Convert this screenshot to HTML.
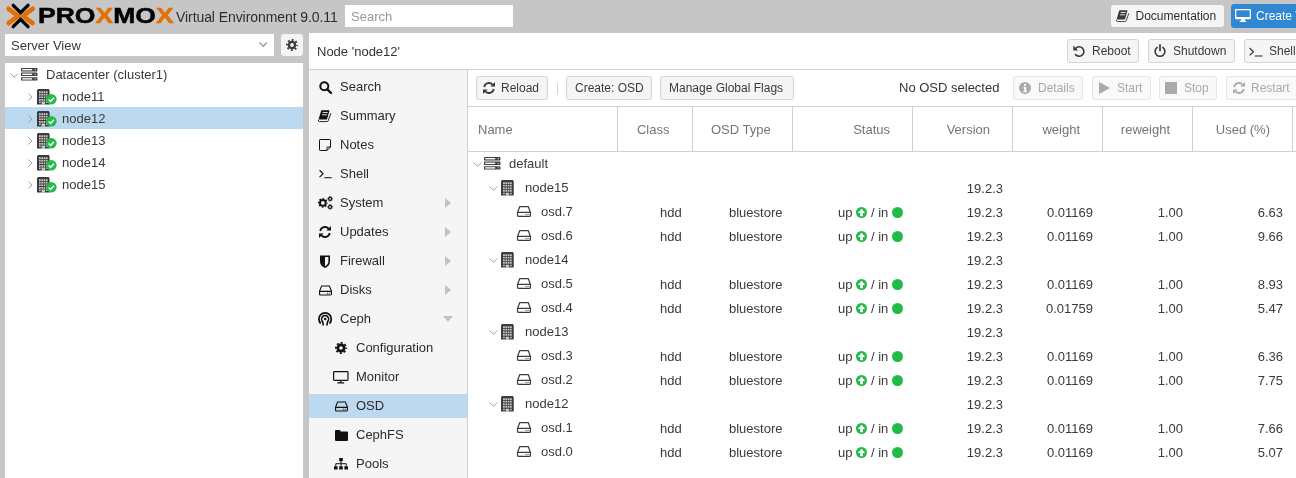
<!DOCTYPE html>
<html lang="en"><head><meta charset="utf-8"><title>node12 - Proxmox Virtual Environment</title>
<style>
*{box-sizing:border-box;margin:0;padding:0}
html,body{width:1296px;height:478px;overflow:hidden;background:#c6c6c6}
body{font-family:"Liberation Sans",sans-serif;font-size:13px;color:#3a3a3a;position:relative}
.abs{position:absolute}
.ic{position:absolute;display:block;overflow:visible}
.t{position:absolute;white-space:nowrap;line-height:16px;height:16px;margin-top:1px}
.btn{position:absolute;height:24px;font-size:12px;border:1px solid #d3d3d3;border-radius:3px;background:#f5f5f5;color:#3a3a3a}
.btn .t{top:3px;margin-top:0}
.btn.dis{background:#f9f9f9;border-color:#e6e6e6;color:#a9a9a9}
.hline{position:absolute;height:1px;background:#cfcfcf}
.vline{position:absolute;width:1px;background:#cfcfcf}
.hd{position:absolute;top:108px;height:44px;line-height:44px;color:#757575;white-space:nowrap}
.row{position:absolute;left:468px;width:828px;height:24px}
.row .t{top:4px;margin-top:0}
.row .c{top:5px}
.nav .t{color:#2a2a2a;margin-top:0}
#root{position:absolute;left:0;top:0;width:1296px;height:478px;will-change:transform;opacity:.999}
</style></head><body><div id="root">

<div class="abs" style="left:0;top:0;width:1296px;height:33px;background:#c6c6c6"></div>
<svg class="ic " viewBox="0 0 30 26" style="width:30px;height:26px;left:5.5px;top:2.6px" fill="currentColor">
<g fill="none" stroke-linecap="round" stroke-linejoin="miter">
<path d="M7.2 2.4 L14.6 9.6 L22 2.4" stroke="#000" stroke-width="3.4"/>
<path d="M7.2 23.6 L14.6 16.4 L22 23.6" stroke="#000" stroke-width="3.4"/>
<path d="M2.6 5.8 L12.2 13 L2.6 20.2" stroke="#e57000" stroke-width="4.6"/>
<path d="M26.6 5.8 L17 13 L26.6 20.2" stroke="#e57000" stroke-width="4.6"/>
</g>
</svg>
<div class="t" id="pmx" style="left:38.3px;top:3.3px;font-weight:bold;font-size:22.3px;line-height:24px;height:24px;letter-spacing:0px;-webkit-text-stroke:0.5px currentColor;transform-origin:0 50%;transform:scaleX(1.19);color:#000">PRO<span style="color:#e57000">X</span>MO<span style="color:#e57000">X</span></div>
<div class="t" id="ve" style="left:176px;top:7px;font-size:14px;line-height:18px;height:18px;letter-spacing:-0.075px;color:#2c2c2c">Virtual Environment 9.0.11</div>
<div class="abs" style="left:345px;top:5px;width:168px;height:22px;background:#fff"></div>
<div class="t" style="left:351px;top:8px;color:#9a9a9a">Search</div>
<div class="btn" style="left:1111px;top:5px;width:113px;height:22px;border:0"><svg class="ic " viewBox="0 0 13.4 12.2" style="width:13.4px;height:12.2px;left:4.5px;top:4.7px;color:#3a3a3a" fill="#3a3a3a"><path d="M3.9 0.2H11Q11.6 0.2 11.4 0.9L9.1 9Q8.9 9.6 8.3 9.6H1.2Q0.5 9.6 0.7 8.9L3.1 0.8Q3.3 0.2 3.9 0.2Z" fill="currentColor"/><path d="M4.7 2.5H9.7M4.05 4.8H9.05" stroke="#f5f5f5" stroke-width="0.9" fill="none"/><path d="M0.5 9.8Q0 11.6 1.6 11.6H9.3Q9.9 11.6 10.1 11L12.9 3.2" fill="none" stroke="currentColor" stroke-width="0.9"/></svg><div class="t" style="left:24.5px;top:3px;color:#2e2e2e">Documentation</div></div>
<div class="btn" style="left:1231px;top:4px;width:80px;background:#2f88d1;border-color:#2f88d1"><svg class="ic " viewBox="0 0 16 13" style="width:16px;height:13px;left:3px;top:4px;color:#fff" fill="#fff"><path d="M1.2 0H14.8Q16 0 16 1.2V9Q16 10.2 14.8 10.2H1.2Q0 10.2 0 9V1.2Q0 0 1.2 0ZM1.3 1.3V7.9H14.7V1.3ZM6.3 10.2H9.7L10.2 12H11.3V13H4.7V12H5.8Z" fill="currentColor" fill-rule="evenodd"/></svg><div class="t" style="left:24px;color:#fff">Create VM</div></div>
<div class="abs" style="left:5px;top:34px;width:269px;height:22px;background:#fff"></div>
<div class="t" style="left:11px;top:37px">Server View</div>
<svg class="ic " viewBox="0 0 8.4 5.2" style="width:8.4px;height:5.2px;left:258.9px;top:41.9px" fill="currentColor"><path d="M0.5 0.6 L4.2 4.3 L7.9 0.6" fill="none" stroke="#9a9a9a" stroke-width="1.4"/></svg>
<div class="abs" style="left:281px;top:34px;width:22px;height:22px;background:#f5f5f5;border-radius:3px"></div>
<svg class="ic " viewBox="0 0 12 12" style="width:12px;height:12px;left:286px;top:39px;color:#3c3c3c" fill="#3c3c3c"><circle cx="6" cy="6" r="3.05" fill="none" stroke="currentColor" stroke-width="2.30"/><circle cx="6" cy="6" r="4.95" fill="none" stroke="currentColor" stroke-width="2.10" stroke-dasharray="1.788 2.099" stroke-dashoffset="0.894"/></svg>
<div class="abs" style="left:5px;top:63px;width:298px;height:415px;background:#fff"></div>
<div class="abs" style="left:5px;top:107px;width:298px;height:22px;background:#bcd9f0"></div>
<svg class="ic " viewBox="0 0 10 6" style="width:8.6px;height:5.2px;left:10px;top:72.6px" fill="currentColor"><path d="M0.6 0.6 L5 5 L9.4 0.6" fill="none" stroke="#9c9c9c" stroke-width="1.15"/></svg>
<svg class="ic " viewBox="0 0 16.4 12.6" style="width:16.4px;height:12.6px;left:20.8px;top:68px;color:#3b3b3b" fill="#3b3b3b"><g fill="currentColor"><rect x="0" y="0" width="16.4" height="3.4" rx=".6"/><rect x="0" y="4.6" width="16.4" height="3.4" rx=".6"/><rect x="0" y="9.2" width="16.4" height="3.4" rx=".6"/></g><g fill="#fff"><rect x="1.2" y="1" width="10" height="1.4"/><rect x="1.2" y="5.6" width="10" height="1.4"/><rect x="1.2" y="10.2" width="10" height="1.4"/><rect x="13.6" y="1.2" width="1.2" height="1"/><rect x="13.6" y="5.8" width="1.2" height="1"/><rect x="13.6" y="10.4" width="1.2" height="1"/></g></svg>
<div class="t" style="left:46px;top:66px">Datacenter (cluster1)</div>
<svg class="ic " viewBox="0 0 6 10" style="width:4.8px;height:8px;left:28.2px;top:93px" fill="currentColor"><path d="M0.6 0.6 L5 5 L0.6 9.4" fill="none" stroke="#9c9c9c" stroke-width="1.15"/></svg>
<svg class="ic " viewBox="0 0 12.6 15.5" style="width:12.6px;height:15.5px;left:37px;top:88.9px;color:#3b3b3b" fill="#3b3b3b"><path d="M0.6 0H12V0.9H12.6V15.5H0V0.9H0.6Z" fill="currentColor"/><g fill="#fff" opacity=".72"><path d="M2 2.2h1.7v1.7H2zM4.3 2.2h1.7v1.7H4.3zM6.6 2.2h1.7v1.7H6.6zM8.9 2.2h1.7v1.7H8.9zM2 4.8h1.7v1.7H2zM4.3 4.8h1.7v1.7H4.3zM6.6 4.8h1.7v1.7H6.6zM8.9 4.8h1.7v1.7H8.9zM2 7.4h1.7v1.7H2zM4.3 7.4h1.7v1.7H4.3zM6.6 7.4h1.7v1.7H6.6zM8.9 7.4h1.7v1.7H8.9zM2 10h1.7v1.7H2zM4.3 10h1.7v1.7H4.3zM6.6 10h1.7v1.7H6.6zM8.9 10h1.7v1.7H8.9zM2 12.6h1.7v1.5H2zM8.9 12.6h1.7v1.5H8.9zM4.6 12.6h3.4v2.9H4.6z"/></g></svg>
<svg class="ic " viewBox="0 0 11 11" style="width:10.6px;height:10.6px;left:45.8px;top:94px" fill="currentColor"><circle cx="5.5" cy="5.5" r="5.5" fill="#21bb48"/><path d="M2.8 5.7L4.8 7.6L8.3 3.8" fill="none" stroke="#fff" stroke-width="1.6"/></svg>
<div class="t" style="left:62px;top:88px">node11</div>
<svg class="ic " viewBox="0 0 6 10" style="width:4.8px;height:8px;left:28.2px;top:115px" fill="currentColor"><path d="M0.6 0.6 L5 5 L0.6 9.4" fill="none" stroke="#9c9c9c" stroke-width="1.15"/></svg>
<svg class="ic " viewBox="0 0 12.6 15.5" style="width:12.6px;height:15.5px;left:37px;top:110.9px;color:#3b3b3b" fill="#3b3b3b"><path d="M0.6 0H12V0.9H12.6V15.5H0V0.9H0.6Z" fill="currentColor"/><g fill="#fff" opacity=".72"><path d="M2 2.2h1.7v1.7H2zM4.3 2.2h1.7v1.7H4.3zM6.6 2.2h1.7v1.7H6.6zM8.9 2.2h1.7v1.7H8.9zM2 4.8h1.7v1.7H2zM4.3 4.8h1.7v1.7H4.3zM6.6 4.8h1.7v1.7H6.6zM8.9 4.8h1.7v1.7H8.9zM2 7.4h1.7v1.7H2zM4.3 7.4h1.7v1.7H4.3zM6.6 7.4h1.7v1.7H6.6zM8.9 7.4h1.7v1.7H8.9zM2 10h1.7v1.7H2zM4.3 10h1.7v1.7H4.3zM6.6 10h1.7v1.7H6.6zM8.9 10h1.7v1.7H8.9zM2 12.6h1.7v1.5H2zM8.9 12.6h1.7v1.5H8.9zM4.6 12.6h3.4v2.9H4.6z"/></g></svg>
<svg class="ic " viewBox="0 0 11 11" style="width:10.6px;height:10.6px;left:45.8px;top:116px" fill="currentColor"><circle cx="5.5" cy="5.5" r="5.5" fill="#21bb48"/><path d="M2.8 5.7L4.8 7.6L8.3 3.8" fill="none" stroke="#fff" stroke-width="1.6"/></svg>
<div class="t" style="left:62px;top:110px">node12</div>
<svg class="ic " viewBox="0 0 6 10" style="width:4.8px;height:8px;left:28.2px;top:137px" fill="currentColor"><path d="M0.6 0.6 L5 5 L0.6 9.4" fill="none" stroke="#9c9c9c" stroke-width="1.15"/></svg>
<svg class="ic " viewBox="0 0 12.6 15.5" style="width:12.6px;height:15.5px;left:37px;top:132.9px;color:#3b3b3b" fill="#3b3b3b"><path d="M0.6 0H12V0.9H12.6V15.5H0V0.9H0.6Z" fill="currentColor"/><g fill="#fff" opacity=".72"><path d="M2 2.2h1.7v1.7H2zM4.3 2.2h1.7v1.7H4.3zM6.6 2.2h1.7v1.7H6.6zM8.9 2.2h1.7v1.7H8.9zM2 4.8h1.7v1.7H2zM4.3 4.8h1.7v1.7H4.3zM6.6 4.8h1.7v1.7H6.6zM8.9 4.8h1.7v1.7H8.9zM2 7.4h1.7v1.7H2zM4.3 7.4h1.7v1.7H4.3zM6.6 7.4h1.7v1.7H6.6zM8.9 7.4h1.7v1.7H8.9zM2 10h1.7v1.7H2zM4.3 10h1.7v1.7H4.3zM6.6 10h1.7v1.7H6.6zM8.9 10h1.7v1.7H8.9zM2 12.6h1.7v1.5H2zM8.9 12.6h1.7v1.5H8.9zM4.6 12.6h3.4v2.9H4.6z"/></g></svg>
<svg class="ic " viewBox="0 0 11 11" style="width:10.6px;height:10.6px;left:45.8px;top:138px" fill="currentColor"><circle cx="5.5" cy="5.5" r="5.5" fill="#21bb48"/><path d="M2.8 5.7L4.8 7.6L8.3 3.8" fill="none" stroke="#fff" stroke-width="1.6"/></svg>
<div class="t" style="left:62px;top:132px">node13</div>
<svg class="ic " viewBox="0 0 6 10" style="width:4.8px;height:8px;left:28.2px;top:159px" fill="currentColor"><path d="M0.6 0.6 L5 5 L0.6 9.4" fill="none" stroke="#9c9c9c" stroke-width="1.15"/></svg>
<svg class="ic " viewBox="0 0 12.6 15.5" style="width:12.6px;height:15.5px;left:37px;top:154.9px;color:#3b3b3b" fill="#3b3b3b"><path d="M0.6 0H12V0.9H12.6V15.5H0V0.9H0.6Z" fill="currentColor"/><g fill="#fff" opacity=".72"><path d="M2 2.2h1.7v1.7H2zM4.3 2.2h1.7v1.7H4.3zM6.6 2.2h1.7v1.7H6.6zM8.9 2.2h1.7v1.7H8.9zM2 4.8h1.7v1.7H2zM4.3 4.8h1.7v1.7H4.3zM6.6 4.8h1.7v1.7H6.6zM8.9 4.8h1.7v1.7H8.9zM2 7.4h1.7v1.7H2zM4.3 7.4h1.7v1.7H4.3zM6.6 7.4h1.7v1.7H6.6zM8.9 7.4h1.7v1.7H8.9zM2 10h1.7v1.7H2zM4.3 10h1.7v1.7H4.3zM6.6 10h1.7v1.7H6.6zM8.9 10h1.7v1.7H8.9zM2 12.6h1.7v1.5H2zM8.9 12.6h1.7v1.5H8.9zM4.6 12.6h3.4v2.9H4.6z"/></g></svg>
<svg class="ic " viewBox="0 0 11 11" style="width:10.6px;height:10.6px;left:45.8px;top:160px" fill="currentColor"><circle cx="5.5" cy="5.5" r="5.5" fill="#21bb48"/><path d="M2.8 5.7L4.8 7.6L8.3 3.8" fill="none" stroke="#fff" stroke-width="1.6"/></svg>
<div class="t" style="left:62px;top:154px">node14</div>
<svg class="ic " viewBox="0 0 6 10" style="width:4.8px;height:8px;left:28.2px;top:181px" fill="currentColor"><path d="M0.6 0.6 L5 5 L0.6 9.4" fill="none" stroke="#9c9c9c" stroke-width="1.15"/></svg>
<svg class="ic " viewBox="0 0 12.6 15.5" style="width:12.6px;height:15.5px;left:37px;top:176.9px;color:#3b3b3b" fill="#3b3b3b"><path d="M0.6 0H12V0.9H12.6V15.5H0V0.9H0.6Z" fill="currentColor"/><g fill="#fff" opacity=".72"><path d="M2 2.2h1.7v1.7H2zM4.3 2.2h1.7v1.7H4.3zM6.6 2.2h1.7v1.7H6.6zM8.9 2.2h1.7v1.7H8.9zM2 4.8h1.7v1.7H2zM4.3 4.8h1.7v1.7H4.3zM6.6 4.8h1.7v1.7H6.6zM8.9 4.8h1.7v1.7H8.9zM2 7.4h1.7v1.7H2zM4.3 7.4h1.7v1.7H4.3zM6.6 7.4h1.7v1.7H6.6zM8.9 7.4h1.7v1.7H8.9zM2 10h1.7v1.7H2zM4.3 10h1.7v1.7H4.3zM6.6 10h1.7v1.7H6.6zM8.9 10h1.7v1.7H8.9zM2 12.6h1.7v1.5H2zM8.9 12.6h1.7v1.5H8.9zM4.6 12.6h3.4v2.9H4.6z"/></g></svg>
<svg class="ic " viewBox="0 0 11 11" style="width:10.6px;height:10.6px;left:45.8px;top:182px" fill="currentColor"><circle cx="5.5" cy="5.5" r="5.5" fill="#21bb48"/><path d="M2.8 5.7L4.8 7.6L8.3 3.8" fill="none" stroke="#fff" stroke-width="1.6"/></svg>
<div class="t" style="left:62px;top:176px">node15</div>
<div class="abs" style="left:309px;top:33px;width:987px;height:445px;background:#fff"></div>
<div class="t" style="left:317px;top:43px;color:#333">Node 'node12'</div>
<div class="btn" style="left:1067px;top:39px;width:72px"><svg class="ic " viewBox="0 0 12 12" style="width:12px;height:12px;left:5px;top:5px;color:#3a3a3a" fill="#3a3a3a"><path d="M2.4 3.7A4.7 4.7 0 1 1 2.2 9" fill="none" stroke="currentColor" stroke-width="1.6"/><path d="M0.3 0.6V5.4H5.1Z" fill="currentColor"/></svg><div class="t" style="left:24px">Reboot</div></div>
<div class="btn" style="left:1148px;top:39px;width:87px"><svg class="ic " viewBox="0 0 12 13" style="width:12px;height:13px;left:5px;top:4.3px;color:#3a3a3a" fill="#3a3a3a"><path d="M3.2 3.4A4.9 4.9 0 1 0 8.8 3.4" fill="none" stroke="currentColor" stroke-width="1.6" stroke-linecap="round"/><path d="M6 0.8V6.4" stroke="currentColor" stroke-width="1.7" stroke-linecap="round"/></svg><div class="t" style="left:24px">Shutdown</div></div>
<div class="btn" style="left:1244px;top:39px;width:80px"><svg class="ic " viewBox="0 0 14 10" style="width:14px;height:10px;left:4px;top:7px;color:#3a3a3a" fill="#3a3a3a"><path d="M0.6 1L4.4 4.7L0.6 8.4" fill="none" stroke="currentColor" stroke-width="1.25"/><path d="M5.8 9H13.6" stroke="currentColor" stroke-width="1.1"/></svg><div class="t" style="left:24px">Shell</div></div>
<div class="hline" style="left:309px;top:69px;width:987px"></div>
<div class="abs nav" style="left:309px;top:70px;width:158px;height:408px;background:#f5f5f5">
<div class="abs" style="left:0;top:324px;width:158px;height:24px;background:#bcd9f0"></div>
<svg class="ic " viewBox="0 0 13 13" style="width:13px;height:13px;left:9.5px;top:10.5px;color:#111" fill="#111"><circle cx="5.3" cy="5.3" r="4" fill="none" stroke="currentColor" stroke-width="2"/><path d="M8.3 8.3L12 12" stroke="currentColor" stroke-width="2.4" stroke-linecap="round"/></svg>
<div class="t" style="left:31px;top:9px">Search</div>
<svg class="ic " viewBox="0 0 13.4 12.2" style="width:13.4px;height:12.2px;left:9.3px;top:39.9px;color:#111" fill="#111"><path d="M3.9 0.2H11Q11.6 0.2 11.4 0.9L9.1 9Q8.9 9.6 8.3 9.6H1.2Q0.5 9.6 0.7 8.9L3.1 0.8Q3.3 0.2 3.9 0.2Z" fill="currentColor"/><path d="M4.7 2.5H9.7M4.05 4.8H9.05" stroke="#f5f5f5" stroke-width="0.9" fill="none"/><path d="M0.5 9.8Q0 11.6 1.6 11.6H9.3Q9.9 11.6 10.1 11L12.9 3.2" fill="none" stroke="currentColor" stroke-width="0.9"/></svg>
<div class="t" style="left:31px;top:38px">Summary</div>
<svg class="ic " viewBox="0 0 12 12" style="width:12px;height:12px;left:10.0px;top:69.0px;color:#111" fill="#111"><path d="M1.2 0.5H10.8Q11.5 0.5 11.5 1.2V8L8 11.5H1.2Q0.5 11.5 0.5 10.8V1.2Q0.5 0.5 1.2 0.5ZM8 11.5V8.6Q8 8 8.6 8H11.5" fill="none" stroke="currentColor" stroke-width="1"/></svg>
<div class="t" style="left:31px;top:67px">Notes</div>
<svg class="ic " viewBox="0 0 14 10" style="width:13px;height:10px;left:9.5px;top:99.0px;color:#111" fill="#111"><path d="M0.6 1L4.4 4.7L0.6 8.4" fill="none" stroke="currentColor" stroke-width="1.25"/><path d="M5.8 9H13.6" stroke="currentColor" stroke-width="1.1"/></svg>
<div class="t" style="left:31px;top:96px">Shell</div>
<svg class="ic " viewBox="0 0 15 14" style="width:15px;height:14px;left:8.5px;top:126.0px;color:#111" fill="#111"><circle cx="4.85" cy="6.9" r="2.85" fill="none" stroke="currentColor" stroke-width="1.90"/><circle cx="4.85" cy="6.9" r="4.20" fill="none" stroke="currentColor" stroke-width="1.40" stroke-dasharray="1.649 1.649" stroke-dashoffset="0.825"/><circle cx="12.1" cy="2.85" r="1.50" fill="none" stroke="currentColor" stroke-width="1.20"/><circle cx="12.1" cy="2.85" r="2.30" fill="none" stroke="currentColor" stroke-width="1.00" stroke-dasharray="0.903 0.903" stroke-dashoffset="0.452"/><circle cx="12.1" cy="10.95" r="1.50" fill="none" stroke="currentColor" stroke-width="1.20"/><circle cx="12.1" cy="10.95" r="2.30" fill="none" stroke="currentColor" stroke-width="1.00" stroke-dasharray="0.903 0.903" stroke-dashoffset="0.452"/></svg>
<div class="t" style="left:31px;top:125px">System</div>
<svg class="ic " viewBox="0 0 6 10" style="width:6px;height:10px;left:136px;top:128px;color:#c2c2c2" fill="#c2c2c2"><path d="M0 0 L6 5 L0 10 Z"/></svg>
<svg class="ic " viewBox="0 0 12 12" style="width:12px;height:12px;left:10.0px;top:156.0px;color:#111" fill="#111"><path d="M1.2 5A4.9 4.9 0 0 1 9.6 2.6M10.8 7A4.9 4.9 0 0 1 2.4 9.4" fill="none" stroke="currentColor" stroke-width="1.8"/><path d="M12 0V4.6H7.4ZM0 12V7.4H4.6Z"/></svg>
<div class="t" style="left:31px;top:154px">Updates</div>
<svg class="ic " viewBox="0 0 6 10" style="width:6px;height:10px;left:136px;top:157px;color:#c2c2c2" fill="#c2c2c2"><path d="M0 0 L6 5 L0 10 Z"/></svg>
<svg class="ic " viewBox="0 0 10 13" style="width:10px;height:13px;left:11.0px;top:184.5px;color:#111" fill="#111"><path d="M0 0.5H10V6.5Q10 10.5 5 13Q0 10.5 0 6.5Z"/><path d="M5 2H8.4V6.5Q8.4 9.4 5 11.2Z" fill="#f5f5f5"/></svg>
<div class="t" style="left:31px;top:183px">Firewall</div>
<svg class="ic " viewBox="0 0 6 10" style="width:6px;height:10px;left:136px;top:186px;color:#c2c2c2" fill="#c2c2c2"><path d="M0 0 L6 5 L0 10 Z"/></svg>
<svg class="ic " viewBox="0 0 14 11" style="width:13px;height:11px;left:9.5px;top:214.5px;color:#111" fill="#111"><path d="M2.8 0.6H11.2L13.4 6.2V9.4Q13.4 10.4 12.4 10.4H1.6Q0.6 10.4 0.6 9.4V6.2Z M0.8 6.4H13.2" fill="none" stroke="currentColor" stroke-width="1.2"/><path d="M8.5 8h1v1h-1zM10.5 8h1v1h-1z"/></svg>
<div class="t" style="left:31px;top:212px">Disks</div>
<svg class="ic " viewBox="0 0 6 10" style="width:6px;height:10px;left:136px;top:215px;color:#c2c2c2" fill="#c2c2c2"><path d="M0 0 L6 5 L0 10 Z"/></svg>
<svg class="ic " viewBox="0 0 14.4 14.2" style="width:14.4px;height:14.2px;left:8.8px;top:241.9px;color:#111" fill="#111"><g fill="none" stroke="currentColor" stroke-linecap="butt"><path d="M2.72 11.5A6.2 6.2 0 1 1 11.48 11.5" stroke-width="1.8"/><path d="M5.4 13.5L4.6 9.6A3.5 3.5 0 1 1 9.6 9.6L8.8 13.5" stroke-width="1.6"/></g><circle cx="7.1" cy="7.1" r="1.25" fill="currentColor"/></svg>
<div class="t" style="left:31px;top:241px">Ceph</div>
<svg class="ic " viewBox="0 0 10 6" style="width:10px;height:6px;left:134px;top:246px;color:#c2c2c2" fill="#c2c2c2"><path d="M0 0 L10 0 L5 6 Z"/></svg>
<svg class="ic " viewBox="0 0 12 12" style="width:12px;height:12px;left:26.0px;top:272.0px;color:#111" fill="#111"><circle cx="6" cy="6" r="3.15" fill="none" stroke="currentColor" stroke-width="2.70"/><circle cx="6" cy="6" r="5.10" fill="none" stroke="currentColor" stroke-width="1.80" stroke-dasharray="2.003 2.003" stroke-dashoffset="1.001"/></svg>
<div class="t" style="left:47px;top:270px">Configuration</div>
<svg class="ic " viewBox="0 0 15.6 12.4" style="width:15.6px;height:12.4px;left:24.2px;top:300.8px;color:#111" fill="#111"><rect x="0.6" y="0.6" width="14.4" height="8.8" rx="0.8" fill="none" stroke="currentColor" stroke-width="1.2"/><path d="M7.2 9.4h1.2v2h-1.2zM4.4 11.3h6.8v1.1H4.4z" fill="currentColor"/></svg>
<div class="t" style="left:47px;top:299px">Monitor</div>
<svg class="ic " viewBox="0 0 14 11" style="width:13px;height:11px;left:25.5px;top:330.5px;color:#111" fill="#111"><path d="M2.8 0.6H11.2L13.4 6.2V9.4Q13.4 10.4 12.4 10.4H1.6Q0.6 10.4 0.6 9.4V6.2Z M0.8 6.4H13.2" fill="none" stroke="currentColor" stroke-width="1.2"/><path d="M8.5 8h1v1h-1zM10.5 8h1v1h-1z"/></svg>
<div class="t" style="left:47px;top:328px">OSD</div>
<svg class="ic " viewBox="0 0 13 11" style="width:13px;height:11px;left:25.5px;top:359.5px;color:#111" fill="#111"><path d="M1 0H4.5Q5.5 0 5.5 1V1.5H12Q13 1.5 13 2.5V10Q13 11 12 11H1Q0 11 0 10V1Q0 0 1 0Z"/></svg>
<div class="t" style="left:47px;top:357px">CephFS</div>
<svg class="ic " viewBox="0 0 14 11.4" style="width:14px;height:11.4px;left:25.0px;top:388.3px;color:#111" fill="#111"><path d="M5.2 0h3.6v3.2H5.2zM0 8.2h3.6v3.2H0zM5.2 8.2h3.6v3.2H5.2zM10.4 8.2h3.6v3.2h-3.6z" fill="currentColor"/><path d="M7 3V8.2M1.8 8.2V5.7H12.2V8.2" fill="none" stroke="currentColor" stroke-width="1"/></svg>
<div class="t" style="left:47px;top:386px">Pools</div>
</div>
<div class="vline" style="left:467px;top:70px;height:408px"></div>
<div class="btn" style="left:476px;top:76px;width:72px"><svg class="ic " viewBox="0 0 12 12" style="width:12px;height:12px;left:6px;top:5px;color:#3a3a3a" fill="#3a3a3a"><path d="M1.2 5A4.9 4.9 0 0 1 9.6 2.6M10.8 7A4.9 4.9 0 0 1 2.4 9.4" fill="none" stroke="currentColor" stroke-width="1.8"/><path d="M12 0V4.6H7.4ZM0 12V7.4H4.6Z"/></svg><div class="t" style="left:24px">Reload</div></div>
<div class="vline" style="left:557px;top:83px;height:12px;background:#d6d6d6"></div>
<div class="btn" style="left:566px;top:76px;width:86px"><div class="t" style="left:8px">Create: OSD</div></div>
<div class="btn" style="left:660px;top:76px;width:134px"><div class="t" style="left:8px">Manage Global Flags</div></div>
<div class="t" style="left:899px;top:79px;color:#333">No OSD selected</div>
<div class="btn dis" style="left:1013px;top:76px;width:70px"><svg class="ic " viewBox="0 0 12 12" style="width:12px;height:12px;left:5.3px;top:5px;color:#aaa" fill="#aaa"><circle cx="6" cy="6" r="6"/><path d="M5 2h2v1.8H5zM4.6 5h2.6v4h.8v1.2H4.4V9h.8V6.2h-.6z" fill="#fff"/></svg><div class="t" style="left:24px">Details</div></div>
<div class="btn dis" style="left:1092px;top:76px;width:59px"><svg class="ic " viewBox="0 0 11 12" style="width:11px;height:12px;left:6px;top:5px;color:#aaa" fill="#aaa"><path d="M0 0L11 6L0 12Z"/></svg><div class="t" style="left:24px">Start</div></div>
<div class="btn dis" style="left:1159px;top:76px;width:58px"><svg class="ic " viewBox="0 0 11 11" style="width:12px;height:12px;left:5px;top:5px;color:#aaa" fill="#aaa"><path d="M0 0H11V11H0Z"/></svg><div class="t" style="left:24px">Stop</div></div>
<div class="btn dis" style="left:1226px;top:76px;width:80px"><svg class="ic " viewBox="0 0 12 12" style="width:12px;height:12px;left:6px;top:5px;color:#aaa" fill="#aaa"><path d="M1.2 5A4.9 4.9 0 0 1 9.6 2.6M10.8 7A4.9 4.9 0 0 1 2.4 9.4" fill="none" stroke="currentColor" stroke-width="1.8"/><path d="M12 0V4.6H7.4ZM0 12V7.4H4.6Z"/></svg><div class="t" style="left:24px">Restart</div></div>
<div class="hline" style="left:468px;top:106px;width:828px"></div>
<div class="hd" style="left:468px;width:149px;text-align:left;padding:0 10px 0 10px">Name</div>
<div class="vline" style="left:617px;top:107px;height:44px"></div>
<div class="hd" style="left:618px;width:74px;text-align:center;padding:0 13.5px 0 10px">Class</div>
<div class="vline" style="left:692px;top:107px;height:44px"></div>
<div class="hd" style="left:693px;width:99px;text-align:center;padding:0 13.5px 0 10px">OSD Type</div>
<div class="vline" style="left:792px;top:107px;height:44px"></div>
<div class="hd" style="left:793px;width:119px;text-align:right;padding:0 22px 0 10px">Status</div>
<div class="vline" style="left:912px;top:107px;height:44px"></div>
<div class="hd" style="left:913px;width:99px;text-align:right;padding:0 22px 0 10px">Version</div>
<div class="vline" style="left:1012px;top:107px;height:44px"></div>
<div class="hd" style="left:1013px;width:89px;text-align:right;padding:0 22px 0 10px">weight</div>
<div class="vline" style="left:1102px;top:107px;height:44px"></div>
<div class="hd" style="left:1103px;width:89px;text-align:right;padding:0 22px 0 10px">reweight</div>
<div class="vline" style="left:1192px;top:107px;height:44px"></div>
<div class="hd" style="left:1193px;width:99px;text-align:right;padding:0 22px 0 10px">Used (%)</div>
<div class="vline" style="left:1292px;top:107px;height:44px"></div>
<div class="hline" style="left:468px;top:151px;width:828px"></div>
<div class="row" style="top:152px">
<svg class="ic " viewBox="0 0 10 6" style="width:9px;height:5.2px;left:5.4px;top:10px" fill="currentColor"><path d="M0.6 0.6 L5 5 L9.4 0.6" fill="none" stroke="#9c9c9c" stroke-width="1.15"/></svg>
<svg class="ic " viewBox="0 0 16.4 12.6" style="width:16.4px;height:12.6px;left:15.8px;top:5px;color:#3b3b3b" fill="#3b3b3b"><g fill="currentColor"><rect x="0" y="0" width="16.4" height="3.4" rx=".6"/><rect x="0" y="4.6" width="16.4" height="3.4" rx=".6"/><rect x="0" y="9.2" width="16.4" height="3.4" rx=".6"/></g><g fill="#fff"><rect x="1.2" y="1" width="10" height="1.4"/><rect x="1.2" y="5.6" width="10" height="1.4"/><rect x="1.2" y="10.2" width="10" height="1.4"/><rect x="13.6" y="1.2" width="1.2" height="1"/><rect x="13.6" y="5.8" width="1.2" height="1"/><rect x="13.6" y="10.4" width="1.2" height="1"/></g></svg>
<div class="t" style="left:41px">default</div>
</div>
<div class="row" style="top:176px">
<svg class="ic " viewBox="0 0 10 6" style="width:9px;height:5.2px;left:21px;top:10px" fill="currentColor"><path d="M0.6 0.6 L5 5 L9.4 0.6" fill="none" stroke="#9c9c9c" stroke-width="1.15"/></svg>
<svg class="ic " viewBox="0 0 12.6 15.5" style="width:12.8px;height:15.6px;left:32.8px;top:3.6px;color:#3b3b3b" fill="#3b3b3b"><path d="M0.6 0H12V0.9H12.6V15.5H0V0.9H0.6Z" fill="currentColor"/><g fill="#fff" opacity=".72"><path d="M2 2.2h1.7v1.7H2zM4.3 2.2h1.7v1.7H4.3zM6.6 2.2h1.7v1.7H6.6zM8.9 2.2h1.7v1.7H8.9zM2 4.8h1.7v1.7H2zM4.3 4.8h1.7v1.7H4.3zM6.6 4.8h1.7v1.7H6.6zM8.9 4.8h1.7v1.7H8.9zM2 7.4h1.7v1.7H2zM4.3 7.4h1.7v1.7H4.3zM6.6 7.4h1.7v1.7H6.6zM8.9 7.4h1.7v1.7H8.9zM2 10h1.7v1.7H2zM4.3 10h1.7v1.7H4.3zM6.6 10h1.7v1.7H6.6zM8.9 10h1.7v1.7H8.9zM2 12.6h1.7v1.5H2zM8.9 12.6h1.7v1.5H8.9zM4.6 12.6h3.4v2.9H4.6z"/></g></svg>
<div class="t" style="left:57px">node15</div>
<div class="t c" style="right:293px">19.2.3</div>
</div>
<div class="row" style="top:200px">
<svg class="ic " viewBox="0 0 14 11" style="width:14px;height:11px;left:49px;top:6px;color:#3b3b3b" fill="#3b3b3b"><path d="M2.8 0.6H11.2L13.4 6.2V9.4Q13.4 10.4 12.4 10.4H1.6Q0.6 10.4 0.6 9.4V6.2Z M0.8 6.4H13.2" fill="none" stroke="currentColor" stroke-width="1.2"/><path d="M8.5 8h1v1h-1zM10.5 8h1v1h-1z"/></svg>
<div class="t" style="left:73px">osd.7</div>
<div class="t c" style="left:192px">hdd</div>
<div class="t c" style="left:261px">bluestore</div>
<div class="t c" style="left:370px">up</div>
<svg class="ic " viewBox="0 0 11 11" style="width:11px;height:11px;left:388.4px;top:6.8px" fill="currentColor"><circle cx="5.5" cy="5.5" r="5.5" fill="#21bb48"/><path d="M5.5 1.7L9.2 5.9H6.9V9.3H4.1V5.9H1.8Z" fill="#fff"/></svg>
<div class="t c" style="left:403px">/ in</div>
<div class="abs" style="left:424px;top:6.8px;width:11px;height:11px;border-radius:50%;background:#21bb48"></div>
<div class="t c" style="right:293px">19.2.3</div>
<div class="t c" style="right:203px">0.01169</div>
<div class="t c" style="right:113px">1.00</div>
<div class="t c" style="right:13px">6.63</div>
</div>
<div class="row" style="top:224px">
<svg class="ic " viewBox="0 0 14 11" style="width:14px;height:11px;left:49px;top:6px;color:#3b3b3b" fill="#3b3b3b"><path d="M2.8 0.6H11.2L13.4 6.2V9.4Q13.4 10.4 12.4 10.4H1.6Q0.6 10.4 0.6 9.4V6.2Z M0.8 6.4H13.2" fill="none" stroke="currentColor" stroke-width="1.2"/><path d="M8.5 8h1v1h-1zM10.5 8h1v1h-1z"/></svg>
<div class="t" style="left:73px">osd.6</div>
<div class="t c" style="left:192px">hdd</div>
<div class="t c" style="left:261px">bluestore</div>
<div class="t c" style="left:370px">up</div>
<svg class="ic " viewBox="0 0 11 11" style="width:11px;height:11px;left:388.4px;top:6.8px" fill="currentColor"><circle cx="5.5" cy="5.5" r="5.5" fill="#21bb48"/><path d="M5.5 1.7L9.2 5.9H6.9V9.3H4.1V5.9H1.8Z" fill="#fff"/></svg>
<div class="t c" style="left:403px">/ in</div>
<div class="abs" style="left:424px;top:6.8px;width:11px;height:11px;border-radius:50%;background:#21bb48"></div>
<div class="t c" style="right:293px">19.2.3</div>
<div class="t c" style="right:203px">0.01169</div>
<div class="t c" style="right:113px">1.00</div>
<div class="t c" style="right:13px">9.66</div>
</div>
<div class="row" style="top:248px">
<svg class="ic " viewBox="0 0 10 6" style="width:9px;height:5.2px;left:21px;top:10px" fill="currentColor"><path d="M0.6 0.6 L5 5 L9.4 0.6" fill="none" stroke="#9c9c9c" stroke-width="1.15"/></svg>
<svg class="ic " viewBox="0 0 12.6 15.5" style="width:12.8px;height:15.6px;left:32.8px;top:3.6px;color:#3b3b3b" fill="#3b3b3b"><path d="M0.6 0H12V0.9H12.6V15.5H0V0.9H0.6Z" fill="currentColor"/><g fill="#fff" opacity=".72"><path d="M2 2.2h1.7v1.7H2zM4.3 2.2h1.7v1.7H4.3zM6.6 2.2h1.7v1.7H6.6zM8.9 2.2h1.7v1.7H8.9zM2 4.8h1.7v1.7H2zM4.3 4.8h1.7v1.7H4.3zM6.6 4.8h1.7v1.7H6.6zM8.9 4.8h1.7v1.7H8.9zM2 7.4h1.7v1.7H2zM4.3 7.4h1.7v1.7H4.3zM6.6 7.4h1.7v1.7H6.6zM8.9 7.4h1.7v1.7H8.9zM2 10h1.7v1.7H2zM4.3 10h1.7v1.7H4.3zM6.6 10h1.7v1.7H6.6zM8.9 10h1.7v1.7H8.9zM2 12.6h1.7v1.5H2zM8.9 12.6h1.7v1.5H8.9zM4.6 12.6h3.4v2.9H4.6z"/></g></svg>
<div class="t" style="left:57px">node14</div>
<div class="t c" style="right:293px">19.2.3</div>
</div>
<div class="row" style="top:272px">
<svg class="ic " viewBox="0 0 14 11" style="width:14px;height:11px;left:49px;top:6px;color:#3b3b3b" fill="#3b3b3b"><path d="M2.8 0.6H11.2L13.4 6.2V9.4Q13.4 10.4 12.4 10.4H1.6Q0.6 10.4 0.6 9.4V6.2Z M0.8 6.4H13.2" fill="none" stroke="currentColor" stroke-width="1.2"/><path d="M8.5 8h1v1h-1zM10.5 8h1v1h-1z"/></svg>
<div class="t" style="left:73px">osd.5</div>
<div class="t c" style="left:192px">hdd</div>
<div class="t c" style="left:261px">bluestore</div>
<div class="t c" style="left:370px">up</div>
<svg class="ic " viewBox="0 0 11 11" style="width:11px;height:11px;left:388.4px;top:6.8px" fill="currentColor"><circle cx="5.5" cy="5.5" r="5.5" fill="#21bb48"/><path d="M5.5 1.7L9.2 5.9H6.9V9.3H4.1V5.9H1.8Z" fill="#fff"/></svg>
<div class="t c" style="left:403px">/ in</div>
<div class="abs" style="left:424px;top:6.8px;width:11px;height:11px;border-radius:50%;background:#21bb48"></div>
<div class="t c" style="right:293px">19.2.3</div>
<div class="t c" style="right:203px">0.01169</div>
<div class="t c" style="right:113px">1.00</div>
<div class="t c" style="right:13px">8.93</div>
</div>
<div class="row" style="top:296px">
<svg class="ic " viewBox="0 0 14 11" style="width:14px;height:11px;left:49px;top:6px;color:#3b3b3b" fill="#3b3b3b"><path d="M2.8 0.6H11.2L13.4 6.2V9.4Q13.4 10.4 12.4 10.4H1.6Q0.6 10.4 0.6 9.4V6.2Z M0.8 6.4H13.2" fill="none" stroke="currentColor" stroke-width="1.2"/><path d="M8.5 8h1v1h-1zM10.5 8h1v1h-1z"/></svg>
<div class="t" style="left:73px">osd.4</div>
<div class="t c" style="left:192px">hdd</div>
<div class="t c" style="left:261px">bluestore</div>
<div class="t c" style="left:370px">up</div>
<svg class="ic " viewBox="0 0 11 11" style="width:11px;height:11px;left:388.4px;top:6.8px" fill="currentColor"><circle cx="5.5" cy="5.5" r="5.5" fill="#21bb48"/><path d="M5.5 1.7L9.2 5.9H6.9V9.3H4.1V5.9H1.8Z" fill="#fff"/></svg>
<div class="t c" style="left:403px">/ in</div>
<div class="abs" style="left:424px;top:6.8px;width:11px;height:11px;border-radius:50%;background:#21bb48"></div>
<div class="t c" style="right:293px">19.2.3</div>
<div class="t c" style="right:203px">0.01759</div>
<div class="t c" style="right:113px">1.00</div>
<div class="t c" style="right:13px">5.47</div>
</div>
<div class="row" style="top:320px">
<svg class="ic " viewBox="0 0 10 6" style="width:9px;height:5.2px;left:21px;top:10px" fill="currentColor"><path d="M0.6 0.6 L5 5 L9.4 0.6" fill="none" stroke="#9c9c9c" stroke-width="1.15"/></svg>
<svg class="ic " viewBox="0 0 12.6 15.5" style="width:12.8px;height:15.6px;left:32.8px;top:3.6px;color:#3b3b3b" fill="#3b3b3b"><path d="M0.6 0H12V0.9H12.6V15.5H0V0.9H0.6Z" fill="currentColor"/><g fill="#fff" opacity=".72"><path d="M2 2.2h1.7v1.7H2zM4.3 2.2h1.7v1.7H4.3zM6.6 2.2h1.7v1.7H6.6zM8.9 2.2h1.7v1.7H8.9zM2 4.8h1.7v1.7H2zM4.3 4.8h1.7v1.7H4.3zM6.6 4.8h1.7v1.7H6.6zM8.9 4.8h1.7v1.7H8.9zM2 7.4h1.7v1.7H2zM4.3 7.4h1.7v1.7H4.3zM6.6 7.4h1.7v1.7H6.6zM8.9 7.4h1.7v1.7H8.9zM2 10h1.7v1.7H2zM4.3 10h1.7v1.7H4.3zM6.6 10h1.7v1.7H6.6zM8.9 10h1.7v1.7H8.9zM2 12.6h1.7v1.5H2zM8.9 12.6h1.7v1.5H8.9zM4.6 12.6h3.4v2.9H4.6z"/></g></svg>
<div class="t" style="left:57px">node13</div>
<div class="t c" style="right:293px">19.2.3</div>
</div>
<div class="row" style="top:344px">
<svg class="ic " viewBox="0 0 14 11" style="width:14px;height:11px;left:49px;top:6px;color:#3b3b3b" fill="#3b3b3b"><path d="M2.8 0.6H11.2L13.4 6.2V9.4Q13.4 10.4 12.4 10.4H1.6Q0.6 10.4 0.6 9.4V6.2Z M0.8 6.4H13.2" fill="none" stroke="currentColor" stroke-width="1.2"/><path d="M8.5 8h1v1h-1zM10.5 8h1v1h-1z"/></svg>
<div class="t" style="left:73px">osd.3</div>
<div class="t c" style="left:192px">hdd</div>
<div class="t c" style="left:261px">bluestore</div>
<div class="t c" style="left:370px">up</div>
<svg class="ic " viewBox="0 0 11 11" style="width:11px;height:11px;left:388.4px;top:6.8px" fill="currentColor"><circle cx="5.5" cy="5.5" r="5.5" fill="#21bb48"/><path d="M5.5 1.7L9.2 5.9H6.9V9.3H4.1V5.9H1.8Z" fill="#fff"/></svg>
<div class="t c" style="left:403px">/ in</div>
<div class="abs" style="left:424px;top:6.8px;width:11px;height:11px;border-radius:50%;background:#21bb48"></div>
<div class="t c" style="right:293px">19.2.3</div>
<div class="t c" style="right:203px">0.01169</div>
<div class="t c" style="right:113px">1.00</div>
<div class="t c" style="right:13px">6.36</div>
</div>
<div class="row" style="top:368px">
<svg class="ic " viewBox="0 0 14 11" style="width:14px;height:11px;left:49px;top:6px;color:#3b3b3b" fill="#3b3b3b"><path d="M2.8 0.6H11.2L13.4 6.2V9.4Q13.4 10.4 12.4 10.4H1.6Q0.6 10.4 0.6 9.4V6.2Z M0.8 6.4H13.2" fill="none" stroke="currentColor" stroke-width="1.2"/><path d="M8.5 8h1v1h-1zM10.5 8h1v1h-1z"/></svg>
<div class="t" style="left:73px">osd.2</div>
<div class="t c" style="left:192px">hdd</div>
<div class="t c" style="left:261px">bluestore</div>
<div class="t c" style="left:370px">up</div>
<svg class="ic " viewBox="0 0 11 11" style="width:11px;height:11px;left:388.4px;top:6.8px" fill="currentColor"><circle cx="5.5" cy="5.5" r="5.5" fill="#21bb48"/><path d="M5.5 1.7L9.2 5.9H6.9V9.3H4.1V5.9H1.8Z" fill="#fff"/></svg>
<div class="t c" style="left:403px">/ in</div>
<div class="abs" style="left:424px;top:6.8px;width:11px;height:11px;border-radius:50%;background:#21bb48"></div>
<div class="t c" style="right:293px">19.2.3</div>
<div class="t c" style="right:203px">0.01169</div>
<div class="t c" style="right:113px">1.00</div>
<div class="t c" style="right:13px">7.75</div>
</div>
<div class="row" style="top:392px">
<svg class="ic " viewBox="0 0 10 6" style="width:9px;height:5.2px;left:21px;top:10px" fill="currentColor"><path d="M0.6 0.6 L5 5 L9.4 0.6" fill="none" stroke="#9c9c9c" stroke-width="1.15"/></svg>
<svg class="ic " viewBox="0 0 12.6 15.5" style="width:12.8px;height:15.6px;left:32.8px;top:3.6px;color:#3b3b3b" fill="#3b3b3b"><path d="M0.6 0H12V0.9H12.6V15.5H0V0.9H0.6Z" fill="currentColor"/><g fill="#fff" opacity=".72"><path d="M2 2.2h1.7v1.7H2zM4.3 2.2h1.7v1.7H4.3zM6.6 2.2h1.7v1.7H6.6zM8.9 2.2h1.7v1.7H8.9zM2 4.8h1.7v1.7H2zM4.3 4.8h1.7v1.7H4.3zM6.6 4.8h1.7v1.7H6.6zM8.9 4.8h1.7v1.7H8.9zM2 7.4h1.7v1.7H2zM4.3 7.4h1.7v1.7H4.3zM6.6 7.4h1.7v1.7H6.6zM8.9 7.4h1.7v1.7H8.9zM2 10h1.7v1.7H2zM4.3 10h1.7v1.7H4.3zM6.6 10h1.7v1.7H6.6zM8.9 10h1.7v1.7H8.9zM2 12.6h1.7v1.5H2zM8.9 12.6h1.7v1.5H8.9zM4.6 12.6h3.4v2.9H4.6z"/></g></svg>
<div class="t" style="left:57px">node12</div>
<div class="t c" style="right:293px">19.2.3</div>
</div>
<div class="row" style="top:416px">
<svg class="ic " viewBox="0 0 14 11" style="width:14px;height:11px;left:49px;top:6px;color:#3b3b3b" fill="#3b3b3b"><path d="M2.8 0.6H11.2L13.4 6.2V9.4Q13.4 10.4 12.4 10.4H1.6Q0.6 10.4 0.6 9.4V6.2Z M0.8 6.4H13.2" fill="none" stroke="currentColor" stroke-width="1.2"/><path d="M8.5 8h1v1h-1zM10.5 8h1v1h-1z"/></svg>
<div class="t" style="left:73px">osd.1</div>
<div class="t c" style="left:192px">hdd</div>
<div class="t c" style="left:261px">bluestore</div>
<div class="t c" style="left:370px">up</div>
<svg class="ic " viewBox="0 0 11 11" style="width:11px;height:11px;left:388.4px;top:6.8px" fill="currentColor"><circle cx="5.5" cy="5.5" r="5.5" fill="#21bb48"/><path d="M5.5 1.7L9.2 5.9H6.9V9.3H4.1V5.9H1.8Z" fill="#fff"/></svg>
<div class="t c" style="left:403px">/ in</div>
<div class="abs" style="left:424px;top:6.8px;width:11px;height:11px;border-radius:50%;background:#21bb48"></div>
<div class="t c" style="right:293px">19.2.3</div>
<div class="t c" style="right:203px">0.01169</div>
<div class="t c" style="right:113px">1.00</div>
<div class="t c" style="right:13px">7.66</div>
</div>
<div class="row" style="top:440px">
<svg class="ic " viewBox="0 0 14 11" style="width:14px;height:11px;left:49px;top:6px;color:#3b3b3b" fill="#3b3b3b"><path d="M2.8 0.6H11.2L13.4 6.2V9.4Q13.4 10.4 12.4 10.4H1.6Q0.6 10.4 0.6 9.4V6.2Z M0.8 6.4H13.2" fill="none" stroke="currentColor" stroke-width="1.2"/><path d="M8.5 8h1v1h-1zM10.5 8h1v1h-1z"/></svg>
<div class="t" style="left:73px">osd.0</div>
<div class="t c" style="left:192px">hdd</div>
<div class="t c" style="left:261px">bluestore</div>
<div class="t c" style="left:370px">up</div>
<svg class="ic " viewBox="0 0 11 11" style="width:11px;height:11px;left:388.4px;top:6.8px" fill="currentColor"><circle cx="5.5" cy="5.5" r="5.5" fill="#21bb48"/><path d="M5.5 1.7L9.2 5.9H6.9V9.3H4.1V5.9H1.8Z" fill="#fff"/></svg>
<div class="t c" style="left:403px">/ in</div>
<div class="abs" style="left:424px;top:6.8px;width:11px;height:11px;border-radius:50%;background:#21bb48"></div>
<div class="t c" style="right:293px">19.2.3</div>
<div class="t c" style="right:203px">0.01169</div>
<div class="t c" style="right:113px">1.00</div>
<div class="t c" style="right:13px">5.07</div>
</div>
</div></body></html>
